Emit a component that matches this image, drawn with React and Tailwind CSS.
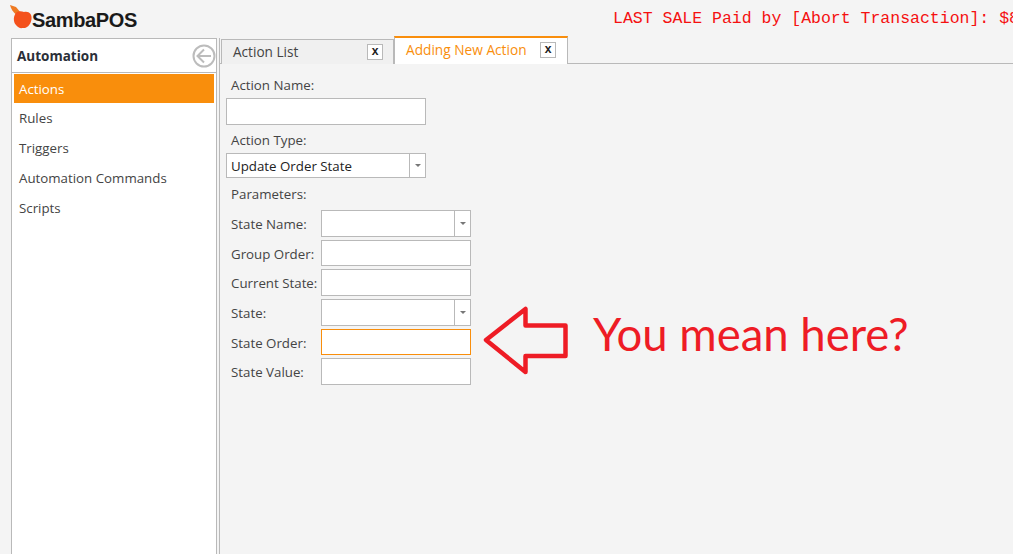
const menuItems = ['Rules', 'Triggers', 'Automation Commands', 'Scripts'];

const CaretBox = () => (
  <div className="w-[16px] h-full border-l border-[#b9b9b9] flex items-center justify-center">
    <svg width="6" height="3" viewBox="0 0 6 3"><path d="M0 0h6L3 3z" fill="#777" /></svg>
  </div>
);

const CloseBox = ({ className = '' }) => (
  <div className={`w-[16px] h-[16px] border border-[#b9b9b9] bg-white flex items-center justify-center text-[12px] leading-none font-bold text-[#222] font-['Liberation_Mono',monospace] ${className}`}>
    x
  </div>
);

const ParamRow = ({ label, combo, focused, className = '' }) => (
  <div className={`flex items-center ${className}`}>
    <span className="w-[90px] whitespace-nowrap pt-[3px]">{label}</span>
    <div className={`w-[150px] h-full bg-white border flex justify-end ${focused ? 'border-[#f98e0c]' : 'border-[#b9b9b9]'}`}>
      {combo && <CaretBox />}
    </div>
  </div>
);

export default function App() {
  return (
    <div className="relative w-[1013px] h-[554px] overflow-hidden bg-[#f4f4f4] flex flex-col font-['Open_Sans',sans-serif] text-[13.3px] text-[#444]">
      <div className="h-[38px] flex shrink-0">
        <div className="w-[613px] shrink-0 flex pl-[10px] pt-[5px]">
          <svg width="23" height="24" viewBox="0 0 23 24">
            <path d="M0 0L6 2l5 6-5 1.500C3 7 1 4 0 0z" fill="#ee7a22" />
            <path d="M7 7c3-1.500 5-.5 7 0 3-.5 5 0 6.500 2 2 3 1 8-1 10.500-2 3-5 4-7 3.500-2 .5-5-.5-6.500-3C3 17 3 10 7 7z" fill="#f4511c" />
          </svg>
          <span className="-ml-[1px] mt-[3px] text-[20px] leading-[24px] font-['Liberation_Sans',sans-serif] font-bold text-[#1a1a1a] tracking-[-0.35px]">SambaPOS</span>
        </div>
        <div className="pt-[9px] whitespace-nowrap text-[16.5px] leading-[20px] text-[#f51010] font-['Liberation_Mono',monospace]">
          LAST SALE Paid by [Abort Transaction]: $8.00
        </div>
      </div>

      <div className="flex flex-1 min-h-0">
        <aside className="ml-[11px] w-[206px] shrink-0 h-[530px] bg-white border border-[#b9b9b9]">
          <div className="h-[34px] border-b border-[#b9b9b9] flex items-center justify-between pl-[5px]">
            <span className="font-bold text-[13.5px] text-[#2b2f38] pt-[1px]">Automation</span>
            <svg width="24" height="24" viewBox="0 0 24 24" fill="none" stroke="#bcbcbc" strokeWidth="2">
              <circle cx="12" cy="12" r="10.500" />
              <path d="M19 12H6M12 5.500L5.500 12l6.500 6.500" />
            </svg>
          </div>
          <div className="px-[2px] pt-[1px]">
            <div className="h-[29px] bg-[#f98e0c] text-white flex items-center pl-[5px] pt-[3px]">Actions</div>
            {menuItems.map((item) => (
              <div key={item} className="h-[30px] flex items-center pl-[5px] pt-[2px] first:pt-[5px]">{item}</div>
            ))}
          </div>
        </aside>

        <main className="ml-[2px] flex-1 border-l border-[#b9b9b9]">
          <div className="h-[26px] border-b border-[#b9b9b9] flex items-end pl-[1px]">
            <div className="w-[173px] h-[25px] -mb-[1px] bg-[#f0f0f0] border border-b-0 border-[#b9b9b9] flex items-center justify-between pl-[11px] pr-[10px]">
              <span className="pt-[1px] text-[13.6px]">Action List</span>
              <CloseBox className="-mt-[1px]" />
            </div>
            <div className="relative w-[174px] h-[28px] -mb-[1px] bg-white border-x border-[#b9b9b9] border-t-2 border-t-[#f98e0c] flex items-center justify-between pl-[11px] pr-[11px] pb-[2px]">
              <span className="text-[13.7px] text-[#f98e0c]">Adding New Action</span>
              <CloseBox />
            </div>
          </div>

          <form className="pl-[6px] pt-[12px]">
            <div className="pl-[5px] h-[18px] leading-[18px]">Action Name:</div>
            <div className="mt-[4px] w-[200px] h-[27px] bg-white border border-[#b9b9b9]" />
            <div className="mt-[6px] pl-[5px] h-[18px] leading-[18px]">Action Type:</div>
            <div className="mt-[4px] w-[200px] h-[25px] bg-white border border-[#b9b9b9] flex items-center justify-between">
              <span className="pl-[4px] text-[#222] pt-[3px]">Update Order State</span>
              <CaretBox />
            </div>
            <div className="mt-[7px] pl-[5px] h-[18px] leading-[18px]">Parameters:</div>
            <div className="mt-[7px] pl-[5px] flex flex-col">
              <ParamRow label="State Name:" combo className="h-[27px]" />
              <ParamRow label="Group Order:" className="h-[26px] mt-[3px]" />
              <ParamRow label="Current State:" className="h-[27px] mt-[3px]" />
              <ParamRow label="State:" combo className="h-[27px] mt-[3px]" />
              <ParamRow label="State Order:" focused className="h-[26px] mt-[3px]" />
              <ParamRow label="State Value:" className="h-[27px] mt-[3px]" />
            </div>
          </form>
        </main>
      </div>

      {/* red annotation drawn over the screenshot */}
      <svg className="absolute left-[480px] top-[303px]" width="92" height="76" viewBox="0 0 92 76" fill="none" stroke="#ee1c25" strokeWidth="4.500" strokeLinejoin="round">
        <path d="M6 37L45.500 6V22.500H85.500V53H45.500V69z" />
      </svg>
      <span className="absolute left-[593px] top-[304px] text-[45.5px] leading-[60px] whitespace-nowrap text-[#ee1c25] font-['Lato',sans-serif]">You mean here?</span>
    </div>
  );
}
